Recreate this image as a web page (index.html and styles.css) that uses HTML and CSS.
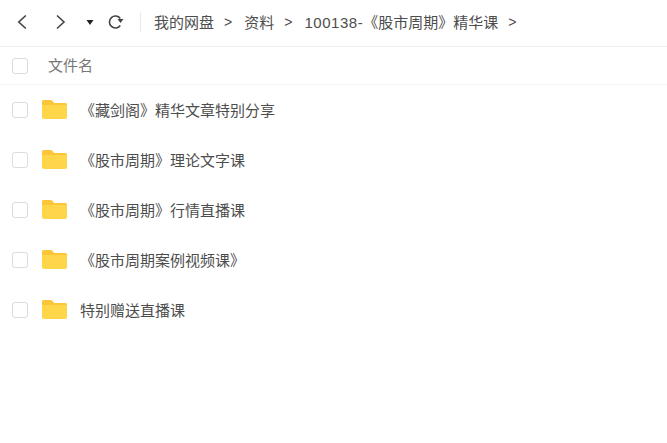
FILE: index.html
```html
<!DOCTYPE html>
<html lang="zh-CN">
<head>
    <meta charset="UTF-8">
    <title>我的网盘</title>
    <link rel="stylesheet" href="styles.css">
</head>
<body>
    <div class="toolbar">
        <svg class="icon-back" width="12" height="16" viewBox="0 0 12 16"><path d="M8.8 1.5 L1.8 8 L8.8 14.5" fill="none" stroke="#444" stroke-width="1.6"/></svg>
        <svg class="icon-forward" width="12" height="16" viewBox="0 0 12 16"><path d="M2 1.5 L9 8 L2 14.5" fill="none" stroke="#444" stroke-width="1.6"/></svg>
        <svg class="icon-caret" width="8" height="5" viewBox="0 0 8 5"><path d="M0.5 0 H7.5 L4 5 Z" fill="#222"/></svg>
        <svg class="icon-refresh" width="17" height="16" viewBox="0 0 17 16"><path d="M13.3 4.5 A6 6 0 1 0 13.3 11.5" fill="none" stroke="#444" stroke-width="1.6"/><path d="M10.5 5 H16.5 L13.5 9 Z" fill="#444"/></svg>
        <div class="divider"></div>
        <div class="crumbs">
            <span>我的网盘</span><span class="sep">&gt;</span>
            <span>资料</span><span class="sep">&gt;</span>
            <span><span class="code">100138-</span>《股市周期》精华课</span><span class="sep">&gt;</span>
        </div>
    </div>

    <div class="list-head">
        <span class="check"></span>
        <span class="head-name">文件名</span>
    </div>

    <div class="row">
        <span class="check"></span>
        <svg class="folder" width="25" height="19" viewBox="0 0 25 19"><path d="M0 2 Q0 0 2 0 H8 Q9.5 0 10.5 1.2 L12 3 H23 Q25 3 25 5 V17 Q25 19 23 19 H2 Q0 19 0 17 Z" fill="#ffd54a"/><path d="M0 2 Q0 0 2 0 H8 Q9.5 0 10.5 1.2 L12 3 H23 Q25 3 25 5 H0 Z" fill="#fcc53a"/></svg>
        <span class="name">《藏剑阁》精华文章特别分享</span>
    </div>
    <div class="row">
        <span class="check"></span>
        <svg class="folder" width="25" height="19" viewBox="0 0 25 19"><path d="M0 2 Q0 0 2 0 H8 Q9.5 0 10.5 1.2 L12 3 H23 Q25 3 25 5 V17 Q25 19 23 19 H2 Q0 19 0 17 Z" fill="#ffd54a"/><path d="M0 2 Q0 0 2 0 H8 Q9.5 0 10.5 1.2 L12 3 H23 Q25 3 25 5 H0 Z" fill="#fcc53a"/></svg>
        <span class="name">《股市周期》理论文字课</span>
    </div>
    <div class="row">
        <span class="check"></span>
        <svg class="folder" width="25" height="19" viewBox="0 0 25 19"><path d="M0 2 Q0 0 2 0 H8 Q9.5 0 10.5 1.2 L12 3 H23 Q25 3 25 5 V17 Q25 19 23 19 H2 Q0 19 0 17 Z" fill="#ffd54a"/><path d="M0 2 Q0 0 2 0 H8 Q9.5 0 10.5 1.2 L12 3 H23 Q25 3 25 5 H0 Z" fill="#fcc53a"/></svg>
        <span class="name">《股市周期》行情直播课</span>
    </div>
    <div class="row">
        <span class="check"></span>
        <svg class="folder" width="25" height="19" viewBox="0 0 25 19"><path d="M0 2 Q0 0 2 0 H8 Q9.5 0 10.5 1.2 L12 3 H23 Q25 3 25 5 V17 Q25 19 23 19 H2 Q0 19 0 17 Z" fill="#ffd54a"/><path d="M0 2 Q0 0 2 0 H8 Q9.5 0 10.5 1.2 L12 3 H23 Q25 3 25 5 H0 Z" fill="#fcc53a"/></svg>
        <span class="name">《股市周期案例视频课》</span>
    </div>
    <div class="row">
        <span class="check"></span>
        <svg class="folder" width="25" height="19" viewBox="0 0 25 19"><path d="M0 2 Q0 0 2 0 H8 Q9.5 0 10.5 1.2 L12 3 H23 Q25 3 25 5 V17 Q25 19 23 19 H2 Q0 19 0 17 Z" fill="#ffd54a"/><path d="M0 2 Q0 0 2 0 H8 Q9.5 0 10.5 1.2 L12 3 H23 Q25 3 25 5 H0 Z" fill="#fcc53a"/></svg>
        <span class="name">特别赠送直播课</span>
    </div>
</body>
</html>
```

FILE: styles.css
```css
body {
    margin: 0;
    background-color: #fff;
    font-family: "Liberation Sans", "Noto Sans CJK SC", sans-serif;
    font-size: 15px;
    color: #4d4d4d;
}

.toolbar {
    display: flex;
    align-items: center;
    height: 44px;
    padding-bottom: 2px;
    padding-left: 17px;
    border-bottom: 1px solid #f0f0f0;
}

.icon-forward {
    margin-left: 26px;
}

.icon-caret {
    margin-left: 19px;
}

.icon-refresh {
    margin-left: 13px;
}

.divider {
    width: 1px;
    height: 20px;
    margin-left: 16px;
    background-color: #eaeaea;
}

.crumbs {
    display: flex;
    align-items: center;
    margin-left: 13px;
    padding-bottom: 1px;
}

.sep {
    margin: 0 12px 0 10px;
    font-size: 14px;
}

.code {
    letter-spacing: 0.55px;
}

.list-head {
    display: flex;
    align-items: center;
    height: 37px;
    padding-left: 12px;
    border-bottom: 1px solid #f4f4f4;
}

.head-name {
    margin-left: 20px;
    padding-bottom: 2px;
    color: #777;
}

.check {
    width: 14px;
    height: 14px;
    border: 1px solid #dcdcdc;
    border-radius: 3px;
    background-color: #fff;
}

.row {
    display: flex;
    align-items: center;
    height: 50px;
    padding-left: 12px;
}

.folder {
    margin-left: 14px;
    margin-top: -2px;
}

.name {
    margin-left: 13px;
    padding-bottom: 1px;
}
```
